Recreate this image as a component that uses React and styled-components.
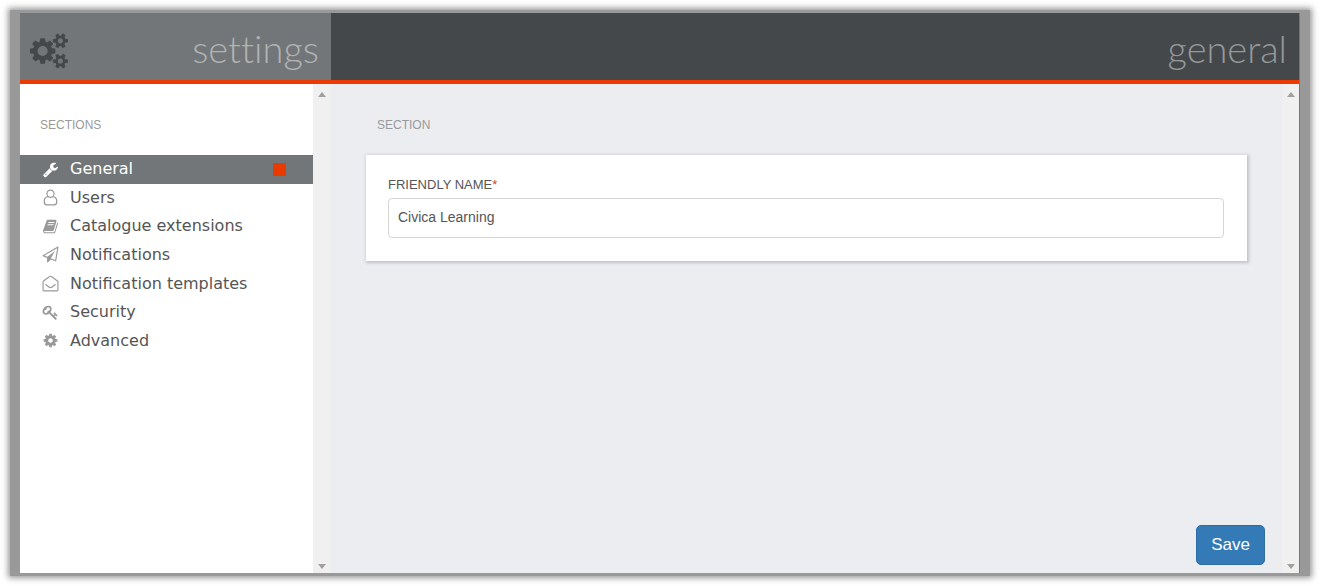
import React, { useState } from "react";
import styled, { createGlobalStyle } from "styled-components";

const GlobalStyle = createGlobalStyle`
  * {
    box-sizing: border-box;
  }
  body {
    margin: 0;
    background: #ffffff;
    font-family: "Liberation Sans", Arial, sans-serif;
  }
`;

const Page = styled.div`
  display: flex;
  min-height: 100vh;
  padding: 10px;
`;
const Frame = styled.div`
  flex: 1;
  display: flex;
  padding: 3px 10px;
  background: #999999;
  box-shadow: 0 0 6px 2px #999999;
`;
const Sidebar = styled.aside`
  width: 311px;
  flex-shrink: 0;
  display: flex;
  flex-direction: column;
  background: #ffffff;
`;
const Content = styled.main`
  flex: 1;
  display: flex;
  flex-direction: column;
  background: #ecedf1;
  border-right: 1px solid #777777;
`;
const Header = styled.header`
  height: 71px;
  display: flex;
  align-items: center;
  justify-content: ${(props) => (props.$end ? "flex-end" : "space-between")};
  padding: 8px 12px 0 10px;
  background: ${(props) => (props.$end ? "#44484b" : "#727678")};
  border-bottom: 4px solid #ec3a02;
  color: #44484b;
`;
const Title = styled.h1`
  margin: 0;
  padding-bottom: 6px;
  font-family: Lato, "Open Sans", sans-serif;
  font-size: 38px;
  font-weight: 300;
  line-height: 48px;
  font-variant-ligatures: none;
  color: ${(props) => (props.$dim ? "#96989a" : "#b1b3b4")};
`;
const Body = styled.div`
  flex: 1;
  display: flex;
`;
const Scroller = styled.div`
  flex: 1;
  display: flex;
  flex-direction: column;
`;
const ScrollBar = styled.div`
  width: ${(props) => (props.$wide ? 18 : 17)}px;
  display: flex;
  flex-direction: column;
  align-items: center;
  justify-content: space-between;
  padding: 8px 0 4px;
  background: #f0f0f0;
`;
const Arrow = styled.svg`
  width: 8px;
  height: 5px;
  fill: #a0a0a0;
`;
const Caption = styled.h2`
  margin: 0;
  padding: ${(props) => (props.$inset ? "33px 46px 22px" : "33px 20px 22px")};
  font-size: 12px;
  font-weight: normal;
  line-height: 16px;
  color: #999999;
`;
const Menu = styled.nav`
  height: 200px;
  display: grid;
  grid-template-rows: repeat(7, 1fr);
`;
const MenuLink = styled.a`
  display: flex;
  align-items: center;
  gap: 11px;
  padding: 0 27px 0 22px;
  font-family: "DejaVu Sans", Verdana, sans-serif;
  font-size: 16px;
  line-height: 28px;
  text-decoration: none;
  color: ${(props) => (props.$active ? "#ffffff" : "#555555")};
  background: ${(props) => (props.$active ? "#727678" : "transparent")};

  svg {
    width: 17px;
    height: 17px;
    flex-shrink: 0;
    fill: ${(props) => (props.$active ? "#ffffff" : "#999999")};
  }
`;
const Marker = styled.span`
  width: 13px;
  height: 13px;
  margin-left: auto;
  background: #ea3a00;
`;
const Cogs = styled.svg`
  width: 38px;
  height: 36px;
  fill: currentColor;
`;
const Card = styled.section`
  margin: 0 35px;
  padding: 22px 23px 23px 22px;
  background: #ffffff;
  box-shadow: 1px 1px 3px 1px #c0c1c5;
`;
const Label = styled.label`
  display: block;
  margin-bottom: 5px;
  font-size: 13px;
  line-height: 16px;
  color: #555555;
`;
const Required = styled.span`
  color: #c9482b;
`;
const Input = styled.input`
  display: block;
  width: 100%;
  height: 40px;
  padding: 0 9px 2px;
  border: 1px solid #d5d5d5;
  border-radius: 4px;
  background: #ffffff;
  font-family: inherit;
  font-size: 14px;
  color: #555555;
`;
const Actions = styled.div`
  display: flex;
  justify-content: flex-end;
  margin-top: auto;
  padding: 8px 17px;
`;
const SaveButton = styled.button`
  height: 40px;
  padding: 0 14px;
  border: 1px solid #2e6da4;
  border-radius: 5px;
  background: #337ab7;
  font-family: inherit;
  font-size: 17px;
  color: #ffffff;
  cursor: pointer;

  &:hover {
    background: #286090;
  }
`;

const menu = [
  {
    name: "General",
    path: "M448 1472q0-26-19-45t-45-19-45 19-19 45 19 45 45 19 45-19 19-45zm644-420l-682 682q-37 37-90 37-52 0-91-37l-106-108q-38-36-38-90 0-53 38-91l681-681q39 98 114.5 173.5t173.5 114.5zm634-435q0 39-23 106-47 134-164.5 217.5t-258.5 83.5q-185 0-316.5-131.5t-131.5-316.5 131.5-316.5 316.5-131.5q58 0 121.5 16.5t107.5 46.5q16 11 16 28t-16 28l-293 169v224l193 107q5-3 79-48.5t135.5-81 70.5-35.5q15 0 23.5 10t8.5 25z",
  },
  {
    name: "Users",
    path: "M896 0a470 470 0 0 1 370 760q400 60 400 620 0 412-350 412H476q-350 0-350-412 0-560 400-620A470 470 0 0 1 896 0zm0 140a330 330 0 1 0 0 660 330 330 0 1 0 0-660zM600 880q-334 20-334 500 0 272 222 272h816q222 0 222-272 0-480-334-500-116 60-296 60t-296-60z",
  },
  {
    name: "Catalogue extensions",
    path: "M1703 478q40 57 18 129l-275 906q-19 64-76.5 107.5t-122.5 43.5h-923q-77 0-148.5-53.5t-99.5-131.5q-24-67-2-127 0-4 3-27t4-37q1-8-3-21.5t-3-19.5q2-11 8-21t16.5-23.5 16.5-23.5q23-38 45-91.5t30-91.5q3-10 .5-30t-.5-28q3-11 17-28t17-23q21-36 42-92t25-90q1-9-2.5-32t.5-28q4-13 22-30.5t22-22.5q19-26 42.5-84.5t27.5-96.5q1-8-3-25.5t-2-26.5q2-8 9-18t18-23 17-21q8-12 16.5-30.5t15-35 16-36 19.5-32 26.5-23.5 36-11.5 47.5 5.5l-1 3q38-9 51-9h761q74 0 114 56t18 130l-274 906q-36 119-71.5 153.5t-128.5 34.5h-869q-27 0-38 15-11 16-1 43 24 70 144 70h923q29 0 56-15.5t35-41.5l300-987q7-22 5-57 38 15 59 43zm-1064 2q-4 13 2 22.5t20 9.5h608q13 0 25.5-9.5t16.5-22.5l21-64q4-13-2-22.5t-20-9.5h-608q-13 0-25.5 9.5t-16.5 22.5zm-83 256q-4 13 2 22.5t20 9.5h608q13 0 25.5-9.5t16.5-22.5l21-64q4-13-2-22.5t-20-9.5h-608q-13 0-25.5 9.5t-16.5 22.5z",
  },
  {
    name: "Notifications",
    path: "M1764 11q33 24 27 64l-256 1536q-5 29-32 45-14 8-31 8-11 0-24-5l-527-215-298 327q-18 21-47 21-14 0-23-4-19-7-30-23.5t-11-36.5v-452l-472-193q-37-14-40-55-3-39 32-59l1664-960q35-21 68 2zm-342 1499l221-1323-1434 827 336 137 863-639-478 797z",
  },
  {
    name: "Notification templates",
    path: "M160 1792q-160 0-160-160V710q0-70 55-115Q340 370 610 165 780 20 896 20t286 145q270 205 555 430 55 45 55 115v922q0 160-160 160zm0-128h1472q32 0 32-32V710q0-10-10-18-280-225-550-425-145-119-208-119T688 267Q418 467 138 692q-10 8-10 18v922q0 32 32 32zM345 960q20-25 45-6 150 120 290 225 150 125 216 125t216-125q140-105 290-225 25-19 45 6l38 49q20 25-5 45-150 120-290 225-170 145-294 145t-294-145q-140-105-290-225-25-20-5-45z",
  },
  {
    name: "Security",
    path: "M832 512q0-80-56-136t-136-56-136 56-56 136q0 42 19 83-41-19-83-19-80 0-136 56t-56 136 56 136 136 56 136-56 56-136q0-42-19-83 41 19 83 19 80 0 136-56t56-136zm851 704q0 17-49 66t-66 49q-9 0-28.5-16t-36.5-33-38.5-40-24.5-26l-96 96 220 220q28 28 28 68 0 42-39 81t-81 39q-40 0-68-28l-671-671q-176 131-365 131-163 0-265.5-102.5t-102.5-265.5q0-160 95-313t248-248 313-95q163 0 265.5 102.5t102.5 265.5q0 189-131 365l355 355 96-96q-3-3-26-24.5t-40-38.5-33-36.5-16-28.5q0-17 49-66t66-49q13 0 23 10 6 6 46 44.5t82 79.5 86.5 86 73 78 28.5 41z",
  },
  {
    name: "Advanced",
    path: "M1152 896q0-106-75-181t-181-75-181 75-75 181 75 181 181 75 181-75 75-181zm512-109v222q0 12-8 23t-20 13l-185 28q-19 54-39 91 35 50 107 138 10 12 10 25t-9 23q-27 37-99 108t-94 71q-12 0-26-9l-138-108q-44 23-91 38-16 136-29 186-7 28-36 28h-222q-14 0-24.5-8.5t-11.5-21.5l-28-184q-49-16-90-37l-141 107q-10 9-25 9-14 0-25-11-126-114-165-168-7-10-7-23 0-12 8-23 15-21 51-66.5t54-70.5q-27-50-41-99l-183-27q-13-2-21-12.5t-8-23.5v-222q0-12 8-23t19-13l186-28q14-46 39-92-40-57-107-138-10-12-10-24 0-10 9-23 26-36 98.5-107.5t94.5-71.5q13 0 26 10l138 107q44-23 91-38 16-136 29-186 7-28 36-28h222q14 0 24.5 8.5t11.5 21.5l28 184q49 16 90 37l142-107q9-9 24-9 13 0 25 10 129 119 165 170 7 8 7 22 0 12-8 23-15 21-51 66.5t-54 70.5q26 50 41 98l183 28q13 2 21 12.5t8 23.5z",
  },
];

const cogsPath =
  "M896 896q0-106-75-181t-181-75-181 75-75 181 75 181 181 75 181-75 75-181zm768 512q0-52-38-90t-90-38-90 38-38 90q0 53 37.5 90.5t90.5 37.5 90.5-37.5 37.5-90.5zm0-1024q0-52-38-90t-90-38-90 38-38 90q0 53 37.5 90.5t90.5 37.5 90.5-37.5 37.5-90.5zm-384 421v185q0 10-7 19.5t-16 10.5l-155 24q-11 35-32 76 34 48 90 115 7 11 7 20 0 12-7 19-23 30-82.5 89.5t-78.5 59.5q-11 0-21-7l-115-90q-37 19-77 31-11 108-23 155-7 24-30 24h-186q-11 0-20-7.5t-10-17.5l-23-153q-34-10-75-31l-118 89q-7 7-20 7-11 0-21-8-144-133-144-160 0-9 7-19 10-14 41-53t47-61q-23-44-35-82l-152-24q-10-1-17-9.5t-7-19.5v-185q0-10 7-19.5t16-10.5l155-24q11-35 32-76-34-48-90-115-7-11-7-20 0-12 7-20 22-30 82-89t79-59q11 0 21 7l115 90q34-18 77-32 11-108 23-154 7-24 30-24h186q11 0 20 7.5t10 17.5l23 153q34 10 75 31l118-89q8-7 20-7 11 0 21 8 144 133 144 160 0 8-7 19-12 16-42 54t-45 60q23 48 34 82l152 23q10 2 17 10.5t7 19.5zm640 533v140q0 16-149 31-12 27-30 52 51 113 51 138 0 4-4 7-122 71-124 71-8 0-46-47t-52-68q-20 2-30 2t-30-2q-14 21-52 68t-46 47q-2 0-124-71-4-3-4-7 0-25 51-138-18-25-30-52-149-15-149-31v-140q0-16 149-31 13-29 30-52-51-113-51-138 0-4 4-7 4-2 35-20t59-34 30-16q8 0 46 46.5t52 67.5q20-2 30-2t30 2q51-71 92-112l6-2q4 0 124 70 4 3 4 7 0 25-51 138 17 23 30 52 149 15 149 31zm0-1024v140q0 16-149 31-12 27-30 52 51 113 51 138 0 4-4 7-122 71-124 71-8 0-46-47t-52-68q-20 2-30 2t-30-2q-14 21-52 68t-46 47q-2 0-124-71-4-3-4-7 0-25 51-138-18-25-30-52-149-15-149-31v-140q0-16 149-31 13-29 30-52-51-113-51-138 0-4 4-7 4-2 35-20t59-34 30-16q8 0 46 46.5t52 67.5q20-2 30-2t30 2q51-71 92-112l6-2q4 0 124 70 4 3 4 7 0 25-51 138 17 23 30 52 149 15 149 31z";

function Scroll({ wide }) {
  return (
    <ScrollBar $wide={wide} aria-hidden="true">
      <Arrow viewBox="0 0 8 5">
        <path d="M0 5L4 0L8 5Z" />
      </Arrow>
      <Arrow viewBox="0 0 8 5">
        <path d="M0 0H8L4 5Z" />
      </Arrow>
    </ScrollBar>
  );
}

function App() {
  const [active, setActive] = useState("General");
  const [friendlyName, setFriendlyName] = useState("Civica Learning");

  return (
    <Page>
      <GlobalStyle />
      <Frame>
        <Sidebar>
          <Header>
            <Cogs viewBox="0 0 1920 1792">
              <path d={cogsPath} />
            </Cogs>
            <Title>settings</Title>
          </Header>
          <Body>
            <Scroller>
              <Caption>SECTIONS</Caption>
              <Menu>
                {menu.map((item) => (
                  <MenuLink
                    key={item.name}
                    href="#"
                    $active={item.name === active}
                    onClick={() => setActive(item.name)}
                  >
                    <svg viewBox="-56 -56 1904 1904">
                      <path d={item.path} fillRule="evenodd" />
                    </svg>
                    {item.name}
                    {item.name === active && <Marker />}
                  </MenuLink>
                ))}
              </Menu>
            </Scroller>
            <Scroll wide />
          </Body>
        </Sidebar>
        <Content>
          <Header $end>
            <Title $dim>general</Title>
          </Header>
          <Body>
            <Scroller>
              <Caption $inset>SECTION</Caption>
              <Card>
                <Label htmlFor="friendly-name">
                  FRIENDLY NAME<Required>*</Required>
                </Label>
                <Input
                  id="friendly-name"
                  type="text"
                  value={friendlyName}
                  onChange={(e) => setFriendlyName(e.target.value)}
                />
              </Card>
              <Actions>
                <SaveButton type="button">Save</SaveButton>
              </Actions>
            </Scroller>
            <Scroll />
          </Body>
        </Content>
      </Frame>
    </Page>
  );
}

export default App;
